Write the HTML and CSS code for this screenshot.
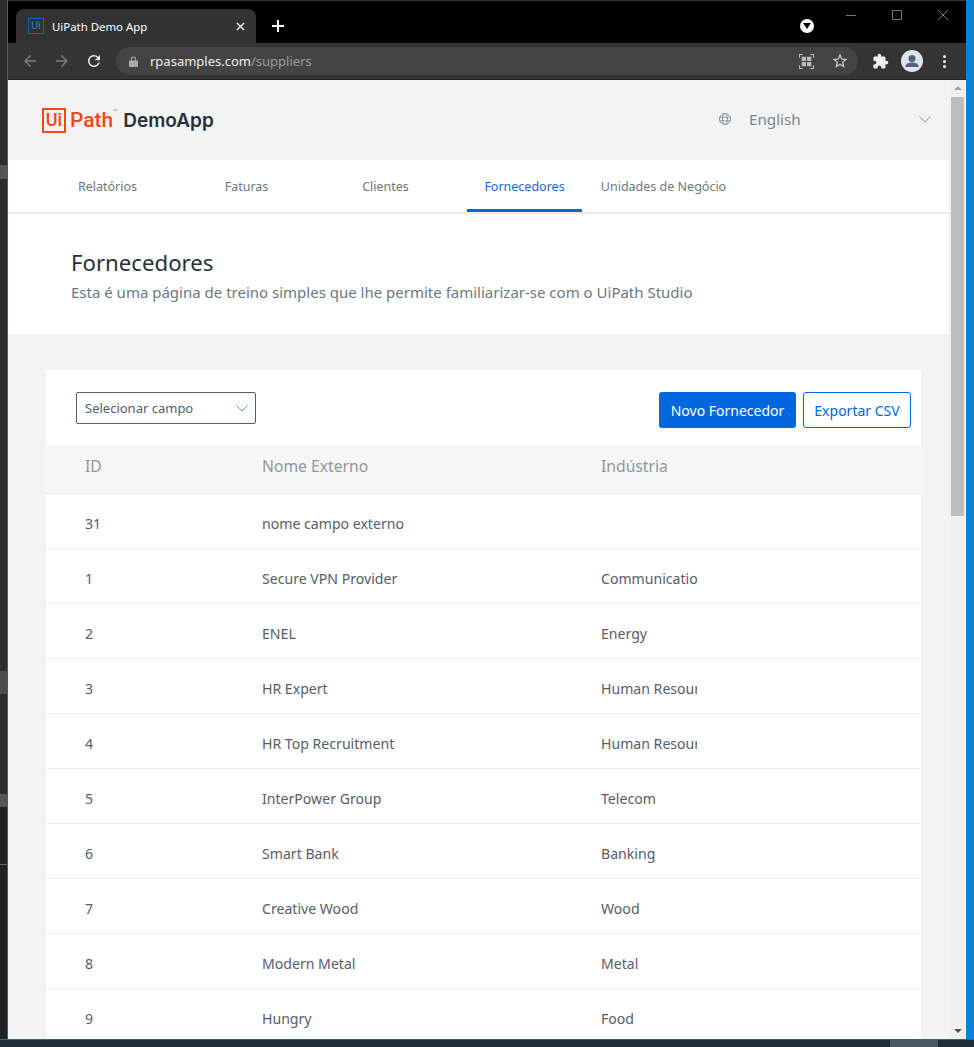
FILE: index.html
```html
<!DOCTYPE html>
<html lang="en">
<head>
    <meta charset="UTF-8">
    <meta name="viewport" content="width=device-width, initial-scale=1.0">
    <title>UiPath Demo App</title>
    <link rel="stylesheet" href="styles.css">
</head>
<body>
<div class="desktop">
    <div class="side-strip">
        <div class="strip-block strip-block-a"></div>
        <div class="strip-block strip-block-b"></div>
        <div class="strip-block strip-block-c"></div>
        <div class="strip-lower">
            <div class="strip-line"></div>
        </div>
    </div>

    <div class="window">
        <div class="titlebar">
            <div class="tab">
                <span class="favicon">Ui</span>
                <span class="tab-title">UiPath Demo App</span>
                <svg class="tab-close" viewBox="0 0 10 10"><path d="M1 1l8 8M9 1l-8 8"/></svg>
            </div>
            <svg class="new-tab" viewBox="0 0 12 12"><path d="M6 0v12M0 6h12"/></svg>
            <div class="tab-search"><svg viewBox="0 0 8 6"><path d="M0 0h8L4 6z"/></svg></div>
            <div class="window-controls">
                <svg viewBox="0 0 10 10"><path d="M0 5.5h10"/></svg>
                <svg viewBox="0 0 10 10"><path d="M.5.5h9v9h-9z"/></svg>
                <svg viewBox="0 0 10 10"><path d="M0 0l10 10M10 0L0 10"/></svg>
            </div>
        </div>

        <div class="toolbar">
            <svg class="nav-icon dim" viewBox="0 0 24 24"><path d="M20 11H7.83l5.59-5.59L12 4l-8 8 8 8 1.41-1.41L7.83 13H20v-2z"/></svg>
            <svg class="nav-icon dim" viewBox="0 0 24 24"><path d="M12 4l-1.41 1.41L16.17 11H4v2h12.17l-5.58 5.59L12 20l8-8z"/></svg>
            <svg class="nav-icon" viewBox="0 0 24 24"><path d="M17.65 6.35A7.958 7.958 0 0 0 12 4c-4.42 0-7.99 3.58-7.99 8s3.57 8 7.99 8c3.73 0 6.84-2.55 7.73-6h-2.08A5.99 5.99 0 0 1 12 18c-3.31 0-6-2.69-6-6s2.69-6 6-6c1.66 0 3.14.69 4.22 1.78L13 11h7V4l-2.35 2.35z"/></svg>
            <div class="omnibox">
                <svg class="lock" viewBox="0 0 10 12"><path d="M2 5V3.4a3 3 0 0 1 6 0V5h1a1 1 0 0 1 1 1v5a1 1 0 0 1-1 1H1a1 1 0 0 1-1-1V6a1 1 0 0 1 1-1zm1.2 0h3.600V3.400a1.800 1.800 0 0 0-3.600 0z"/></svg>
                <span class="url">rpasamples.com<span class="url-path">/suppliers</span></span>
                <svg class="qr" viewBox="0 0 14 14">
                    <path class="qr-frame" d="M.5 3.500v-3h3M10.500.5h3v3M13.500 10.500v3h-3M3.500 13.500h-3v-3"/>
                    <path class="qr-fill" d="M2.500 2.500h4v4h-4zM7.500 2.500h4v4h-4zM2.500 7.500h4v4h-4zM7.500 7.500h4v4h-4z"/>
                </svg>
                <svg class="star" viewBox="0 0 24 24"><path d="M22 9.240l-7.190-.62L12 2 9.190 8.630 2 9.240l5.460 4.730L5.820 21 12 17.270 18.180 21l-1.630-7.030L22 9.240zM12 15.400l-3.760 2.270 1-4.280-3.320-2.880 4.380-.38L12 6.100l1.710 4.040 4.380.38-3.320 2.880 1 4.280L12 15.400z"/></svg>
            </div>
            <svg class="puzzle" viewBox="0 0 24 24"><path d="M20.500 11H19V7c0-1.100-.9-2-2-2h-4V3.500C13 2.120 11.880 1 10.500 1S8 2.120 8 3.500V5H4c-1.100 0-1.990.9-1.990 2v3.800H3.500c1.490 0 2.700 1.210 2.700 2.700s-1.210 2.700-2.700 2.700H2V20c0 1.100.9 2 2 2h3.800v-1.500c0-1.490 1.210-2.700 2.700-2.700 1.490 0 2.700 1.210 2.700 2.700V22H17c1.100 0 2-.9 2-2v-4h1.500c1.380 0 2.500-1.120 2.500-2.500S21.880 11 20.500 11z"/></svg>
            <svg class="avatar" viewBox="0 0 22 22">
                <circle class="avatar-bg" cx="11" cy="11" r="11"/>
                <circle class="avatar-fg" cx="11" cy="8.500" r="3.500"/>
                <path class="avatar-fg" d="M4.500 16c0-2.500 4.500-3.600 6.500-3.600s6.500 1.100 6.500 3.600v1h-13z"/>
            </svg>
            <div class="kebab"><span></span><span></span><span></span></div>
        </div>

        <div class="viewport">
            <div class="page">
                <header class="app-header">
                    <div class="logo">
                        <span class="logo-box">Ui</span>
                        <span class="logo-path">Path</span>
                        <span class="logo-tm">™</span>
                        <span class="logo-app">DemoApp</span>
                    </div>
                    <div class="lang">
                        <svg class="globe" viewBox="0 0 12 12">
                            <circle cx="6" cy="6" r="5.500"/>
                            <ellipse cx="6" cy="6" rx="2.500" ry="5.500"/>
                            <path d="M.5 4.200h11M.5 7.800h11"/>
                        </svg>
                        <span class="lang-name">English</span>
                        <svg class="lang-chevron" viewBox="0 0 12 7"><path d="M.5.5L6 6 11.500.5"/></svg>
                    </div>
                </header>

                <nav class="tabs">
                    <a class="tab-link">Relatórios</a>
                    <a class="tab-link">Faturas</a>
                    <a class="tab-link">Clientes</a>
                    <a class="tab-link active">Fornecedores</a>
                    <a class="tab-link">Unidades de Negócio</a>
                </nav>

                <section class="intro">
                    <h1>Fornecedores</h1>
                    <p>Esta é uma página de treino simples que lhe permite familiarizar-se com o UiPath Studio</p>
                </section>

                <main class="content">
                    <div class="card">
                        <div class="card-tools">
                            <div class="field-select">
                                <span>Selecionar campo</span>
                                <svg viewBox="0 0 12 7"><path d="M.5.5L6 6 11.500.5"/></svg>
                            </div>
                            <div class="actions">
                                <button class="btn btn-primary">Novo Fornecedor</button>
                                <button class="btn btn-outline">Exportar CSV</button>
                            </div>
                        </div>
                        <table class="suppliers">
                            <thead>
                                <tr><th>ID</th><th>Nome Externo</th><th>Indústria</th></tr>
                            </thead>
                            <tbody>
                                <tr><td>31</td><td>nome campo externo</td><td></td></tr>
                                <tr><td>1</td><td>Secure VPN Provider</td><td><div class="clip">Communications</div></td></tr>
                                <tr><td>2</td><td>ENEL</td><td><div class="clip">Energy</div></td></tr>
                                <tr><td>3</td><td>HR Expert</td><td><div class="clip">Human Resources</div></td></tr>
                                <tr><td>4</td><td>HR Top Recruitment</td><td><div class="clip">Human Resources</div></td></tr>
                                <tr><td>5</td><td>InterPower Group</td><td><div class="clip">Telecom</div></td></tr>
                                <tr><td>6</td><td>Smart Bank</td><td><div class="clip">Banking</div></td></tr>
                                <tr><td>7</td><td>Creative Wood</td><td><div class="clip">Wood</div></td></tr>
                                <tr><td>8</td><td>Modern Metal</td><td><div class="clip">Metal</div></td></tr>
                                <tr><td>9</td><td>Hungry</td><td><div class="clip">Food</div></td></tr>
                            </tbody>
                        </table>
                    </div>
                </main>
            </div>

            <div class="scrollbar">
                <svg class="scroll-arrow" viewBox="0 0 8 4"><path d="M4 0l4 4H0z"/></svg>
                <div class="scroll-thumb"></div>
                <svg class="scroll-arrow scroll-arrow-down" viewBox="0 0 8 4"><path d="M0 0h8L4 4z"/></svg>
            </div>
        </div>
    </div>

    <div class="side-blue"></div>
</div>
<div class="taskbar"><div class="taskbar-item"></div></div>
</body>
</html>
```

FILE: styles.css
```css
html, body {
    margin: 0;
    height: 1047px;
    overflow: hidden;
    background: #1f2d36;
    font-family: "Noto Sans", Arial, sans-serif;
}
.desktop {
    display: flex;
    height: 1039px;
}
.side-strip {
    width: 7px;
    background: #2c2c2c;
    border-right: 1px solid #2f6688;
    overflow: hidden;
    display: flex;
    flex-direction: column;
}
.strip-block {
    flex: none;
    background: #555;
}
.strip-block-a {
    height: 14px;
    margin-top: 165px;
}
.strip-block-b {
    height: 23px;
    margin-top: 492px;
    background: #4c4c4c;
}
.strip-block-c {
    height: 13px;
    margin-top: 100px;
}
.strip-lower {
    flex: 1;
    background: #212121;
    padding-top: 57px;
}
.strip-line {
    height: 1px;
    background: #666;
}
.side-blue {
    width: 8px;
    background: #0a84d6;
}
.taskbar {
    height: 8px;
    background: #1f2d36;
    border-top: 1px solid #2f6688;
    box-sizing: border-box;
    padding-left: 890px;
}
.taskbar-item {
    width: 48px;
    height: 7px;
    background: #4a5a63;
}

/* browser chrome */
.window {
    flex: 1;
    min-width: 0;
    display: flex;
    flex-direction: column;
}
.titlebar {
    height: 43px;
    box-sizing: border-box;
    background: #000;
    border-top: 1px solid #333;
    display: flex;
    align-items: flex-end;
    padding-left: 8px;
    position: relative;
}
.tab {
    width: 240px;
    height: 34px;
    box-sizing: border-box;
    background: #323232;
    border-radius: 8px 8px 0 0;
    display: flex;
    align-items: center;
    padding: 0 11px 0 12px;
    color: #fff;
    font-size: 11.400px;
}
.favicon {
    width: 16px;
    height: 16px;
    box-sizing: border-box;
    border: 1.5px solid #0a62c4;
    color: #2d83dc;
    font-size: 10px;
    line-height: 13px;
    text-align: center;
    margin-right: 8px;
}
.tab-title {
    flex: 1;
}
.tab-close {
    width: 9px;
    height: 9px;
    fill: none;
    stroke: #eee;
    stroke-width: 1.6;
}
.new-tab {
    width: 12px;
    height: 12px;
    margin: 0 0 11px 16px;
    fill: none;
    stroke: #fff;
    stroke-width: 2;
}
.tab-search {
    width: 14px;
    height: 14px;
    border-radius: 50%;
    background: #fff;
    position: absolute;
    left: 792px;
    top: 18px;
    display: flex;
    align-items: center;
    justify-content: center;
}
.tab-search svg {
    width: 8px;
    height: 6px;
}
.window-controls {
    position: absolute;
    right: 18px;
    top: 9px;
    display: flex;
    gap: 36px;
}
.window-controls svg {
    width: 10px;
    height: 10px;
    fill: none;
    stroke: #777;
    stroke-width: 1;
}
.toolbar {
    height: 37px;
    box-sizing: border-box;
    background: #343434;
    border-bottom: 1px solid #222;
    display: flex;
    align-items: center;
    padding-left: 13px;
}
.nav-icon {
    width: 18px;
    height: 18px;
    margin-right: 14px;
    fill: #e8e8e8;
}
.nav-icon.dim {
    fill: #7b7b7b;
}
.omnibox {
    width: 742px;
    height: 28px;
    margin-left: -1px;
    box-sizing: border-box;
    background: #434343;
    border-radius: 14px;
    display: flex;
    align-items: center;
    padding: 0 9px 0 13px;
    font-size: 13px;
    color: #eee;
}
.lock {
    width: 9px;
    height: 11px;
    fill: #aaa;
    margin-right: 12px;
}
.url {
    flex: 1;
}
.url-path {
    color: #9c9c9c;
}
.qr {
    width: 15px;
    height: 15px;
    margin-right: 17px;
}
.qr-frame {
    fill: none;
    stroke: #bbb;
    stroke-width: 1;
}
.qr-fill {
    fill: #bbb;
}
.star {
    width: 18px;
    height: 18px;
    fill: #ccc;
}
.puzzle {
    width: 17px;
    height: 17px;
    margin-left: 14px;
    fill: #f0f0f0;
}
.avatar {
    width: 22px;
    height: 22px;
    margin-left: 12px;
}
.avatar-bg {
    fill: #dfe3ea;
}
.avatar-fg {
    fill: #56627a;
}
.kebab {
    margin-left: 20px;
    display: flex;
    flex-direction: column;
    gap: 2px;
}
.kebab span {
    width: 3px;
    height: 3px;
    border-radius: 50%;
    background: #eee;
}

/* page */
.viewport {
    flex: 1;
    min-height: 0;
    display: flex;
}
.page {
    flex: 1;
    min-width: 0;
    background: #f3f3f3;
    overflow: hidden;
}
.scrollbar {
    width: 17px;
    background: #f0f0f0;
    position: relative;
    padding: 17px 2px 0 2px;
    box-sizing: border-box;
}
.scroll-thumb {
    height: 419px;
    background: #bdbdbd;
}
.scroll-arrow {
    position: absolute;
    left: 5px;
    top: 6px;
    width: 8px;
    height: 4px;
    fill: #a3a3a3;
}
.scroll-arrow-down {
    top: auto;
    bottom: 6px;
    fill: #505050;
}
.app-header {
    height: 80px;
    display: flex;
    align-items: center;
    justify-content: space-between;
    padding: 0 18px 2px 34px;
    box-sizing: border-box;
}
.logo {
    display: flex;
    align-items: center;
    color: #fa4616;
    margin-top: 2px;
}
.logo-box {
    width: 24px;
    height: 25px;
    box-sizing: border-box;
    border: 2.500px solid #fa4616;
    font-size: 18px;
    font-weight: 500;
    line-height: 20px;
    text-align: center;
    font-family: "Roboto", sans-serif;
}
.logo-path {
    font-size: 21px;
    font-weight: 500;
    margin-left: 4px;
    font-family: "Roboto", sans-serif;
}
.logo-tm {
    font-size: 5px;
    align-self: flex-start;
    width: 10px;
}
.logo-app {
    font-family: "Inter", sans-serif;
    font-weight: 600;
    font-size: 19px;
    color: #273139;
}
.lang {
    display: flex;
    align-items: center;
    color: #7a8590;
}
.globe {
    width: 12px;
    height: 12px;
    fill: none;
    stroke: #8a95a0;
    stroke-width: 1;
}
.lang-name {
    font-size: 15.200px;
    margin-left: 18px;
    width: 170px;
}
.lang-chevron, .field-select svg {
    width: 12px;
    height: 7px;
    fill: none;
    stroke: #8a95a0;
    stroke-width: 1;
}
.tabs {
    height: 52px;
    background: #fff;
    border-bottom: 2px solid #ececec;
    display: flex;
    gap: 24px;
    padding-left: 42px;
}
.tab-link {
    width: 115px;
    display: flex;
    align-items: center;
    justify-content: center;
    white-space: nowrap;
    box-sizing: border-box;
    border-bottom: 3px solid transparent;
    border-top: 3px solid transparent;
    font-size: 12.500px;
    color: #6b7882;
}
.tab-link.active {
    color: #1f64d8;
    border-bottom-color: #0067df;
}
.intro {
    height: 120px;
    box-sizing: border-box;
    background: #fff;
    padding: 34px 0 0 63px;
}
.intro h1 {
    margin: 0;
    font-size: 22.200px;
    font-weight: 400;
    line-height: 30px;
    color: #273139;
}
.intro p {
    margin: 3px 0 0;
    font-size: 15px;
    line-height: 22px;
    color: #6b7882;
}
.content {
    padding: 36px 28px 0 38px;
}
.card {
    background: #fff;
}
.card-tools {
    height: 75px;
    box-sizing: border-box;
    display: flex;
    justify-content: space-between;
    align-items: flex-start;
    padding: 22px 10px 0 30px;
}
.field-select {
    width: 180px;
    height: 32px;
    box-sizing: border-box;
    border: 1px solid #526069;
    border-radius: 2px;
    display: flex;
    align-items: center;
    justify-content: space-between;
    padding: 0 7px 0 8px;
    font-size: 13px;
    color: #526069;
}
.field-select svg {
    stroke: #5a9be0;
}
.actions {
    display: flex;
    gap: 7px;
}
.btn {
    height: 36px;
    box-sizing: border-box;
    border-radius: 3px;
    font-family: inherit;
    font-size: 14px;
    padding: 0;
    cursor: pointer;
}
.btn-primary {
    width: 137px;
    background: #0067df;
    color: #fff;
    border: none;
}
.btn-outline {
    width: 108px;
    background: #fff;
    color: #0067df;
    border: 1px solid #0067df;
}
.suppliers {
    width: 100%;
    border-collapse: collapse;
    table-layout: fixed;
}
.suppliers th, .suppliers td {
    text-align: left;
    padding: 0;
    box-sizing: border-box;
}
.suppliers th:nth-child(1) {
    width: 216px;
    padding-left: 39px;
}
.suppliers th:nth-child(2) {
    width: 339px;
}
.suppliers th {
    height: 48px;
    padding-bottom: 5px;
    background: #f6f6f6;
    font-size: 15.700px;
    font-weight: 400;
    color: #8f979e;
    border-bottom: 1px solid #ececec;
}
.suppliers td {
    height: 55px;
    padding-top: 6px;
    font-size: 14.100px;
    color: #555e66;
    border-bottom: 1px solid #f0f0f0;
}
.suppliers td:first-child {
    padding-left: 39px;
}
.clip {
    width: 96px;
    overflow: hidden;
    white-space: nowrap;
}
```
